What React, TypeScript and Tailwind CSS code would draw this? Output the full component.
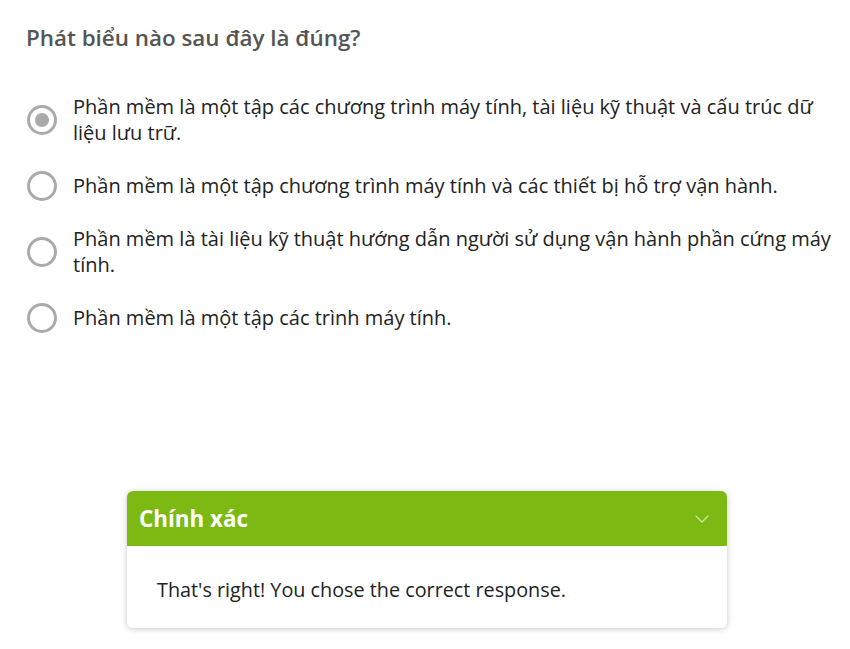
import { ChevronDown } from "lucide-react";

const options = [
  { id: 1, text: "Phần mềm là một tập các chương trình máy tính, tài liệu kỹ thuật và cấu trúc dữ liệu lưu trữ.", checked: true },
  { id: 2, text: "Phần mềm là một tập chương trình máy tính và các thiết bị hỗ trợ vận hành.", checked: false },
  { id: 3, text: "Phần mềm là tài liệu kỹ thuật hướng dẫn người sử dụng vận hành phần cứng máy tính.", checked: false },
  { id: 4, text: "Phần mềm là một tập các trình máy tính.", checked: false },
]

function Radio({ checked }: { checked: boolean }) {
  return (
    <span className="flex items-center justify-center shrink-0 w-[30px] h-[30px] rounded-full border-[3px] border-[#aaaaaa] bg-white">
      {checked && <span className="w-[14px] h-[14px] rounded-full bg-[#aaaaaa]" />}
    </span>
  )
}

export default function App() {
  return (
    <div className="w-[850px] h-[649px] bg-white font-['Open_Sans',sans-serif] overflow-hidden">
      <div className="pl-[26px] pr-[16px] pt-[23px]">
        <h1 className="text-[22.4px] leading-[30px] font-semibold text-[#555555]">
          Phát biểu nào sau đây là đúng?
        </h1>

        <div className="flex flex-col gap-[25px] mt-[41px]">
          {options.map((option) => (
            <label key={option.id} className="flex items-center gap-[16px] pl-[1px]">
              <Radio checked={option.checked} />
              <span className="text-[20px] leading-[26px] text-[#222222]">{option.text}</span>
            </label>
          ))}
        </div>
      </div>

      <div className="flex justify-center pl-[4px] mt-[158px]">
        <div className="w-[600px] rounded-[6px] overflow-hidden bg-white shadow-[0_1px_6px_rgba(0,0,0,0.22)]">
          <div className="flex items-center justify-between h-[55px] bg-[#7cb913] pl-[12px] pr-[13px]">
            <span className="text-[22.4px] font-bold text-white">Chính xác</span>
            <ChevronDown size={24} strokeWidth={1.2} className="text-[#d2e8aa]" />
          </div>
          <div className="h-[82px] flex items-center pl-[30px] pt-[6px]">
            <p className="text-[19.8px] text-[#222222]">That's right! You chose the correct response.</p>
          </div>
        </div>
      </div>
    </div>
  )
}
